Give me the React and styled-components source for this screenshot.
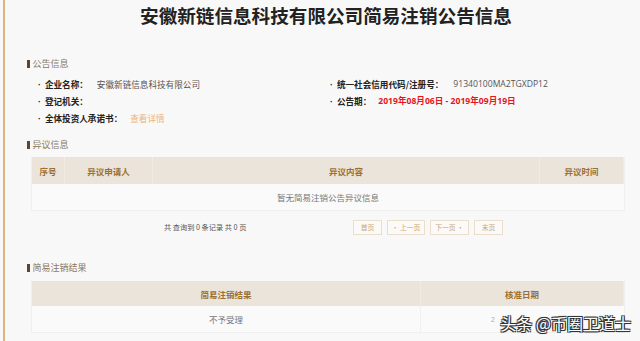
import React from "react";
import styled, { createGlobalStyle } from "styled-components";

const GlobalStyle = createGlobalStyle`
    html, body {
        margin: 0;
        padding: 0;
        background: #f8f8f8;
    }
    body {
        font-family: "Noto Sans CJK SC", "Noto Sans", "Liberation Sans", sans-serif;
        color: #333;
    }
`;

const Page = styled.div`
    margin-left: 3px;
    border-left: 2px solid #dcb777;
    min-height: 341px;
    padding: 1px 0 0 22px;
    box-sizing: border-box;
    width: 624px;
`;

const Title = styled.h1`
    margin: 0;
    font-size: 18.6px;
    line-height: 28px;
    font-weight: 700;
    text-align: center;
    color: #222;
    padding-right: 2px;
`;

const SectionTitle = styled.div`
    display: flex;
    align-items: center;
    gap: 3px;
    font-size: 9px;
    line-height: 12px;
    color: #8a7862;
    margin-top: ${(p) => p.$top}px;
    &::before {
        content: "";
        width: 2.5px;
        height: 8px;
        background: #5c4630;
    }
`;

const InfoGrid = styled.div`
    display: grid;
    grid-template-columns: 292px 1fr;
    grid-auto-rows: 17px;
    padding-left: 11px;
    margin-top: 5px;
`;

const InfoItem = styled.div`
    display: flex;
    align-items: center;
    font-size: 8.6px;
`;

const Label = styled.span`
    font-weight: 700;
    color: #222;
    margin-right: ${(p) => p.$gap || 13}px;
    &::before {
        content: "·";
        font-family: "Liberation Sans", sans-serif;
        margin-right: 4px;
        font-weight: 700;
    }
`;

const Value = styled.span`
    color: ${(p) => (p.$tone === "red" ? "#e8141c" : p.$tone === "link" ? "#f0b27a" : "#555")};
    font-weight: ${(p) => (p.$tone === "red" ? 700 : 400)};
    font-family: ${(p) => (p.$latin ? '"Open Sans", "Noto Sans CJK SC", sans-serif' : "inherit")};
`;

const Table = styled.div`
    display: grid;
    grid-template-columns: ${(p) => p.$cols};
    width: 594px;
    margin-top: ${(p) => p.$top}px;
    margin-left: 4px;
    border: 1px solid #efefef;
    border-top: none;
    box-sizing: border-box;
`;

const HeadCell = styled.div`
    background: #ebe4da;
    height: ${(p) => p.$h}px;
    display: flex;
    align-items: center;
    justify-content: center;
    font-size: 8.5px;
    font-weight: 700;
    color: #9a7034;
    border-right: 1px solid #f0ebe4;
    &:last-child {
        border-right: none;
    }
`;

const BodyCell = styled.div`
    grid-column: ${(p) => p.$span || "auto"};
    height: ${(p) => p.$h}px;
    display: flex;
    align-items: center;
    justify-content: ${(p) => p.$align || "center"};
    font-size: 8.5px;
    color: #777;
    background: #fafafa;
    border-right: 1px solid #f0f0f0;
    &:last-child {
        border-right: none;
    }
`;

const DateText = styled.span`
    font-size: 7px;
    color: #aaa;
    margin-left: 70px;
    font-family: "Liberation Sans", sans-serif;
`;

const Pager = styled.div`
    display: flex;
    align-items: center;
    margin-top: 8px;
    height: 16px;
    padding-left: 137px;
`;

const PagerInfo = styled.span`
    font-size: 7.2px;
    color: #555;
    width: 189px;
`;

const PageButton = styled.span`
    display: inline-flex;
    align-items: center;
    justify-content: center;
    height: 15px;
    width: ${(p) => p.$w}px;
    margin-right: 5px;
    border: 1px solid #eadfcd;
    background: #fbfaf8;
    font-size: 6.8px;
    color: #c8a67c;
    box-sizing: border-box;
`;

const ResultWrap = styled.div`
    position: relative;
`;

const Watermark = styled.div`
    position: absolute;
    right: -4px;
    bottom: 1px;
    font-size: 16px;
    line-height: 18px;
    color: #fff;
    white-space: nowrap;
    text-shadow: -1px -1px 0 #333, 1px -1px 0 #333, -1px 1px 0 #333, 1px 1px 0 #333, 0 0 2px #222;
`;

export default function App() {
    return (
        <>
            <GlobalStyle />
            <Page>
                <Title>安徽新链信息科技有限公司简易注销公告信息</Title>

                <SectionTitle $top={29}>公告信息</SectionTitle>
                <InfoGrid>
                    <InfoItem>
                        <Label $gap={9}>企业名称：</Label>
                        <Value>安徽新链信息科技有限公司</Value>
                    </InfoItem>
                    <InfoItem>
                        <Label $gap={10}>统一社会信用代码/注册号：</Label>
                        <Value $latin>91340100MA2TGXDP12</Value>
                    </InfoItem>
                    <InfoItem>
                        <Label>登记机关：</Label>
                        <Value />
                    </InfoItem>
                    <InfoItem>
                        <Label $gap={7}>公告期：</Label>
                        <Value $tone="red" $latin>2019年08月06日 - 2019年09月19日</Value>
                    </InfoItem>
                    <InfoItem>
                        <Label $gap={8}>全体投资人承诺书：</Label>
                        <Value $tone="link">查看详情</Value>
                    </InfoItem>
                </InfoGrid>

                <SectionTitle $top={13}>异议信息</SectionTitle>
                <Table $cols="33px 88px 387px 1fr" $top={6}>
                    <HeadCell $h={27}>序号</HeadCell>
                    <HeadCell $h={27}>异议申请人</HeadCell>
                    <HeadCell $h={27}>异议内容</HeadCell>
                    <HeadCell $h={27}>异议时间</HeadCell>
                    <BodyCell $span="1 / -1" $h={26}>暂无简易注销公告异议信息</BodyCell>
                </Table>

                <Pager>
                    <PagerInfo>共 查询到 0 条记录 共 0 页</PagerInfo>
                    <PageButton $w={29}>首页</PageButton>
                    <PageButton $w={38}>• 上一页</PageButton>
                    <PageButton $w={39}>下一页 •</PageButton>
                    <PageButton $w={29}>末页</PageButton>
                </Pager>

                <SectionTitle $top={27}>简易注销结果</SectionTitle>
                <ResultWrap>
                    <Table $cols="389px 1fr" $top={7}>
                        <HeadCell $h={25}>简易注销结果</HeadCell>
                        <HeadCell $h={25}>核准日期</HeadCell>
                        <BodyCell $h={26}>不予受理</BodyCell>
                        <BodyCell $h={26} $align="flex-start">
                            <DateText>2</DateText>
                        </BodyCell>
                    </Table>
                    <Watermark>头条 @币圈卫道士</Watermark>
                </ResultWrap>
            </Page>
        </>
    );
}
